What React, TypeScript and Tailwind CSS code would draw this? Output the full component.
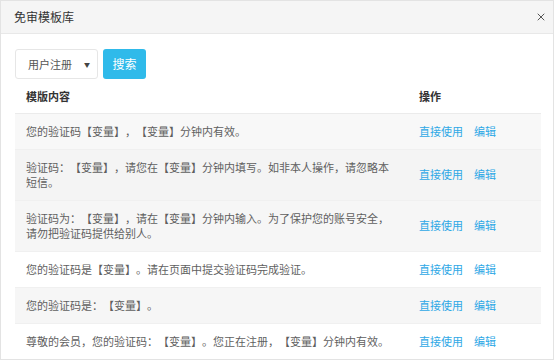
import { X } from "lucide-react";

const rows = [
  { text: "您的验证码【变量】，【变量】分钟内有效。", bg: "bg-[#f8f8f8]" },
  { text: "验证码：【变量】，请您在【变量】分钟内填写。如非本人操作，请忽略本短信。", bg: "bg-[#f4f4f4]" },
  { text: "验证码为：【变量】，请在【变量】分钟内输入。为了保护您的账号安全，请勿把验证码提供给别人。", bg: "bg-[#f6f6f6]" },
  { text: "您的验证码是【变量】。请在页面中提交验证码完成验证。", bg: "bg-white" },
  { text: "您的验证码是：【变量】。", bg: "bg-[#f6f6f6]" },
  { text: "尊敬的会员，您的验证码：【变量】。您正在注册，【变量】分钟内有效。", bg: "bg-white" },
];

export default function App() {
  return (
    <div
      className="w-[555px] h-[362px] bg-white [text-spacing-trim:space-all]"
      style={{ fontFamily: '"Noto Sans CJK SC", "Noto Sans", sans-serif' }}
    >
      <div className="w-[554px] h-[360px] border border-[#e3e3e3] bg-white flex flex-col">
        {/* header */}
        <div className="h-[33px] shrink-0 flex items-center justify-between pl-[13px] pr-[6px] bg-[#f5f5f5] border-b border-[#e8e8e8]">
          <span className="text-[12px] text-[#333]">免审模板库</span>
          <X size={12} strokeWidth={2} className="text-[#555]" />
        </div>

        {/* body */}
        <div className="pl-[14px] pr-[13px] pt-[15px]">
          <div className="flex items-center gap-[5px]">
            <div className="w-[83px] h-[30px] border border-[#e6e6e6] rounded-[3px] flex items-center justify-between pl-[12px] pr-[7px] text-[11px] text-[#555]">
              <span>用户注册</span>
              <span className="text-[6px] text-[#444]">▼</span>
            </div>
            <button className="w-[43px] h-[30px] rounded-[3px] bg-[#2fbaea] text-white text-[12px]">
              搜索
            </button>
          </div>

          <table className="mt-[1px] w-[526px] table-fixed border-collapse text-[11px]">
            <colgroup>
              <col className="w-[393px]" />
              <col className="w-[133px]" />
            </colgroup>
            <thead>
              <tr className="border-b border-[#ebebeb]">
                <th className="h-[33px] text-left font-bold text-[#333] pl-[11px]">模版内容</th>
                <th className="text-left font-bold text-[#333] pl-[11px]">操作</th>
              </tr>
            </thead>
            <tbody>
              {rows.map((r, i) => (
                <tr key={i} className={`${r.bg} border-t border-[#f0f0f0]`}>
                  <td className="pl-[11px] pr-[14px] py-[10px] leading-[15px] text-[#5f5f5f] align-middle">
                    {r.text}
                  </td>
                  <td className="pl-[11px] align-middle text-[#2ea8e6] whitespace-nowrap">
                    <span>直接使用</span>
                    <span className="ml-[11px]">编辑</span>
                  </td>
                </tr>
              ))}
            </tbody>
          </table>
        </div>
      </div>
    </div>
  );
}
